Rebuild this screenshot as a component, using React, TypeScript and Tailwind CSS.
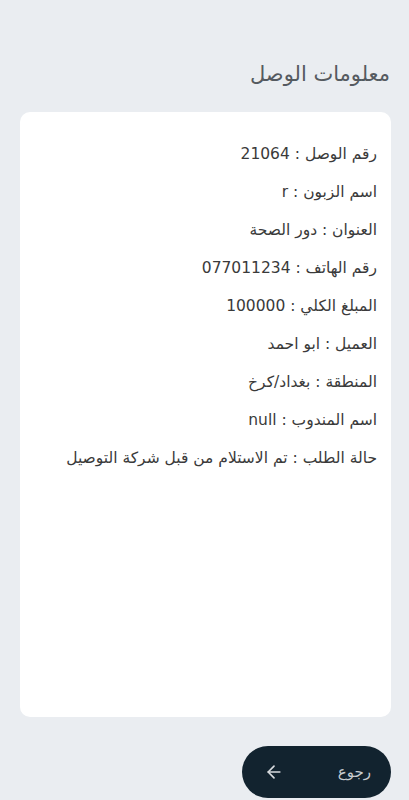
import { ArrowLeft } from 'lucide-react';

const ROWS = [
  'رقم الوصل : 21064',
  'اسم الزبون : r',
  'العنوان : دور الصحة',
  'رقم الهاتف : 077011234',
  'المبلغ الكلي : 100000',
  'العميل : ابو احمد',
  'المنطقة : بغداد/كرخ',
  'اسم المندوب : null',
  'حالة الطلب : تم الاستلام من قبل شركة التوصيل',
];

export default function App() {
  return (
    <div dir="rtl" className="flex h-[800px] w-full flex-col bg-[#eaedf1] font-['DejaVu_Sans',sans-serif]">
      <h1 className="mr-[19px] mt-[58px] text-[21px] leading-[32px] text-[#555a60]">معلومات الوصل</h1>

      <div className="ml-[20px] mr-[18px] mt-[22px] h-[605px] rounded-[10px] bg-white pl-[20px] pr-[14px] pt-[31px]">
        <div className="flex flex-col gap-[15px]">
          {ROWS.map((row) => (
            <p key={row} className="text-[15.5px] leading-[23px] text-[#3a3a3a]">
              {row}
            </p>
          ))}
        </div>
      </div>

      <div className="mr-[18px] mt-[29px] flex">
        <button className="flex h-[52px] w-[149px] items-center justify-between rounded-full bg-[#12232f] pl-[22px] pr-[20px] text-[15px] text-[#c8ccd0]">
          <span>رجوع</span>
          <ArrowLeft size={20} strokeWidth={2} className="shrink-0 text-[#d8dbdf]" />
        </button>
      </div>
    </div>
  );
}
